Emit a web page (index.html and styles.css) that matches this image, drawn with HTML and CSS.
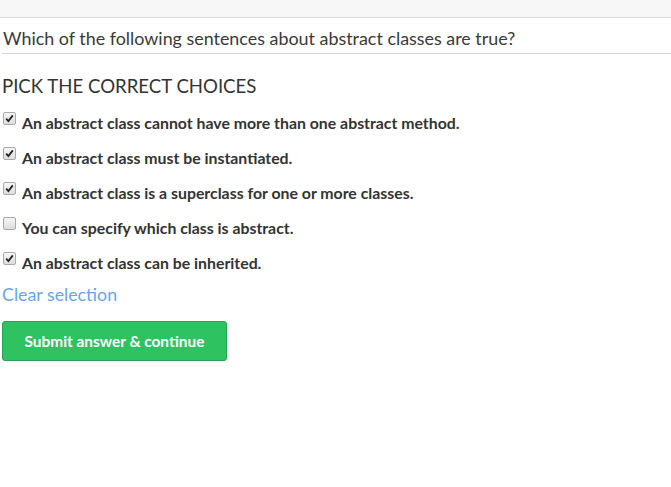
FILE: index.html
```html
<!DOCTYPE html>
<html>
<head>
<meta charset="utf-8">
<link rel="stylesheet" href="styles.css">
</head>
<body>
<div class="topbar"></div>
<div class="question">Which of the following sentences about abstract classes are true?</div>
<div class="content">
  <h2 class="heading">PICK THE CORRECT CHOICES</h2>
  <ul class="choices">
    <li class="choice"><span class="box checked"><svg viewBox="0 0 13 13" width="13" height="13"><path d="M3.2 6.6 L5.4 9 L9.8 3.4" fill="none" stroke="#222" stroke-width="1.8"/></svg></span><span>An abstract class cannot have more than one abstract method.</span></li>
    <li class="choice"><span class="box checked"><svg viewBox="0 0 13 13" width="13" height="13"><path d="M3.2 6.6 L5.4 9 L9.8 3.4" fill="none" stroke="#222" stroke-width="1.8"/></svg></span><span>An abstract class must be instantiated.</span></li>
    <li class="choice"><span class="box checked"><svg viewBox="0 0 13 13" width="13" height="13"><path d="M3.2 6.6 L5.4 9 L9.8 3.4" fill="none" stroke="#222" stroke-width="1.8"/></svg></span><span>An abstract class is a superclass for one or more classes.</span></li>
    <li class="choice"><span class="box"></span><span>You can specify which class is abstract.</span></li>
    <li class="choice"><span class="box checked"><svg viewBox="0 0 13 13" width="13" height="13"><path d="M3.2 6.6 L5.4 9 L9.8 3.4" fill="none" stroke="#222" stroke-width="1.8"/></svg></span><span>An abstract class can be inherited.</span></li>
  </ul>
  <a class="clear" href="#">Clear selection</a>
  <button class="submit">Submit answer &amp; continue</button>
</div>
</body>
</html>
```
FILE: styles.css
```css
* { box-sizing: border-box; }
body {
  margin: 0;
  font-family: Lato, "Open Sans", sans-serif;
  color: #333;
  background: #fff;
}
.topbar {
  height: 18px;
  background: #f7f7f7;
  border-bottom: 1px solid #dcdcdc;
}
.question {
  margin-left: 2px;
  padding: 10px 0 4px 1px;
  font-size: 17.9px;
  line-height: 21px;
  color: #3a3a3a;
  border-bottom: 1px solid #d6d6d6;
}
.content {
  padding: 0 2px;
  display: flex;
  flex-direction: column;
  align-items: flex-start;
}
.heading {
  margin: 20px 0 0 0;
  font-size: 18.6px;
  font-weight: normal;
  line-height: 24px;
  color: #333;
}
.choices {
  list-style: none;
  margin: 7px 0 0 0;
  padding: 0;
}
.choice {
  display: flex;
  align-items: center;
  height: 35px;
  font-size: 15.85px;
  font-weight: bold;
  color: #333;
}
.box {
  flex: none;
  display: block;
  width: 13px;
  height: 13px;
  margin: 0 6px 0 1px;
  position: relative;
  top: -4px;
  border: 1px solid #a9a9a9;
  border-radius: 2px;
  background: linear-gradient(#f6f6f6, #dedede);
}
.box svg {
  display: block;
  margin: -1px;
}
.clear {
  margin-top: 3px;
  font-size: 17.8px;
  line-height: 22px;
  color: #6aa4ea;
  text-decoration: none;
}
.submit {
  margin-top: 16px;
  width: 225px;
  height: 40px;
  background: #2ec260;
  border: 1px solid #26a350;
  border-radius: 3px;
  color: #fff;
  font-family: Lato, sans-serif;
  font-size: 15.4px;
  font-weight: bold;
}
```
